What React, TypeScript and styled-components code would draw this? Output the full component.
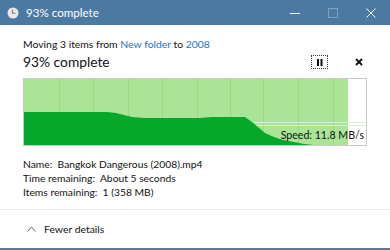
import styled, { createGlobalStyle } from "styled-components";

const GlobalStyle = createGlobalStyle`
  html, body {
    margin: 0;
    padding: 0;
    background: #ffffff;
  }
  #root {
    width: 390px;
    height: 250px;
  }
`;

const Window = styled.div`
  width: 390px;
  height: 250px;
  display: flex;
  flex-direction: column;
  box-sizing: border-box;
  font-family: "Lato", "Liberation Sans", sans-serif;
  color: #111111;
  background: #ffffff;
  overflow: hidden;
`;

const TitleBar = styled.div`
  height: 25px;
  flex: 0 0 25px;
  background: #4b79a1;
  display: flex;
  align-items: center;
  padding-left: 7px;
  color: #ffffff;
  font-size: 11.6px;
`;

const TitleText = styled.span`
  margin-left: 7px;
  flex: 1;
`;

const WinButton = styled.div<{ $dim?: boolean }>`
  width: 38px;
  height: 25px;
  display: flex;
  align-items: center;
  justify-content: center;
  opacity: ${(p) => (p.$dim ? 0.3 : 1)};
`;

const Main = styled.div`
  padding: 12px 23px 0 23px;
  display: flex;
  flex-direction: column;
`;

const Subtitle = styled.div`
  font-size: 10.4px;
  line-height: 14px;
  a {
    color: #1f6fc7;
    text-decoration: none;
  }
`;

const HeadingRow = styled.div`
  display: flex;
  align-items: center;
  height: 20px;
  margin-top: 1px;
`;

const Heading = styled.div`
  flex: 1;
  font-size: 13.8px;
  line-height: 20px;
`;

const IconButton = styled.div<{ $focused?: boolean }>`
  width: 17px;
  height: 14px;
  box-sizing: border-box;
  border: 1px dotted ${(p) => (p.$focused ? "#333" : "transparent")};
  display: flex;
  align-items: center;
  justify-content: center;
  margin-left: ${(p) => (p.$focused ? "0" : "22px")};
`;

const Chart = styled.div`
  position: relative;
  margin-top: 6px;
  width: 344px;
  height: 68px;
  box-sizing: border-box;
  border: 1px solid #c9c9c9;
  background: #ffffff;
`;

const SpeedLabel = styled.span`
  position: absolute;
  right: 2px;
  bottom: 3px;
  font-size: 10.6px;
  line-height: 13px;
`;

const Details = styled.div`
  margin-top: 11px;
  font-size: 10.3px;
  line-height: 14px;
`;

const Footer = styled.div`
  margin-top: auto;
  height: 37px;
  border-top: 1px solid #e9e9e9;
  border-bottom: 2px solid #5c7995;
  display: flex;
  align-items: center;
  padding-left: 27px;
  font-size: 10.4px;
  padding-bottom: 1px;
`;

const FooterText = styled.span`
  margin-left: 8px;
`;

const profile =
  "M0,66 L0,33 L83,33 L92,34 L100,36 L108,38 L120,39 L176,39 L188,38 L221,38 L228,43 L234,48 L241,54 L250,58 L259,61 L270,63 L280,65 L290,66 Z";

const gridX = [35, 69, 104, 138, 173, 206, 239, 274, 309];

const SpeedGraph = () => (
  <svg width="342" height="66" viewBox="0 0 342 66" style={{ display: "block" }}>
    <rect x="0" y="0" width="324" height="66" fill="#a9e497" />
    {gridX.map((x) => (
      <line key={x} x1={x + 0.5} y1="0" x2={x + 0.5} y2="66" stroke="#97d985" strokeWidth="1" />
    ))}
    <line x1="0" y1="43.5" x2="342" y2="43.5" stroke="#d9eed4" strokeWidth="1" />
    <line x1="0" y1="46.5" x2="342" y2="46.5" stroke="#d9eed4" strokeWidth="1" />
    <path d={profile} fill="#06a82b" />
  </svg>
);

export default function App() {
  return (
    <>
      <GlobalStyle />
      <Window>
        <TitleBar>
          <svg width="12" height="12" viewBox="0 0 12 12">
            <circle cx="6" cy="6" r="5.5" fill="#e9e9e9" />
            <path d="M5.5 2.5 V6.3 H8.5" stroke="#7a7a7a" strokeWidth="1.1" fill="none" />
          </svg>
          <TitleText>93% complete</TitleText>
          <WinButton>
            <svg width="10" height="10" viewBox="0 0 10 10">
              <line x1="0" y1="5.5" x2="10" y2="5.5" stroke="#ffffff" strokeWidth="1" />
            </svg>
          </WinButton>
          <WinButton $dim>
            <svg width="10" height="10" viewBox="0 0 10 10">
              <rect x="0.5" y="0.5" width="9" height="9" fill="none" stroke="#ffffff" strokeWidth="1" />
            </svg>
          </WinButton>
          <WinButton>
            <svg width="10" height="10" viewBox="0 0 10 10">
              <path d="M0.5 0.5 L9.5 9.5 M9.5 0.5 L0.5 9.5" stroke="#ffffff" strokeWidth="1" />
            </svg>
          </WinButton>
        </TitleBar>
        <Main>
          <Subtitle>
            Moving 3 items from <a>New folder</a> to <a>2008</a>
          </Subtitle>
          <HeadingRow>
            <Heading>93% complete</Heading>
            <IconButton $focused>
              <svg width="7" height="7" viewBox="0 0 7 7">
                <rect x="1" y="0" width="2" height="7" fill="#111" />
                <rect x="4.5" y="0" width="2" height="7" fill="#111" />
              </svg>
            </IconButton>
            <IconButton>
              <svg width="8" height="8" viewBox="0 0 8 8">
                <path d="M1 1 L7 7 M7 1 L1 7" stroke="#111" strokeWidth="1.8" />
              </svg>
            </IconButton>
          </HeadingRow>
          <Chart>
            <SpeedGraph />
            <SpeedLabel>Speed: 11.8 MB/s</SpeedLabel>
          </Chart>
          <Details>
            <div>Name:&nbsp; Bangkok Dangerous (2008).mp4</div>
            <div>Time remaining:&nbsp; About 5 seconds</div>
            <div>Items remaining:&nbsp; 1 (358 MB)</div>
          </Details>
        </Main>
        <Footer>
          <svg width="9" height="6" viewBox="0 0 9 6">
            <path d="M0.5 5.5 L4.5 1 L8.5 5.5" stroke="#6b6b6b" strokeWidth="1" fill="none" />
          </svg>
          <FooterText>Fewer details</FooterText>
        </Footer>
      </Window>
    </>
  );
}
